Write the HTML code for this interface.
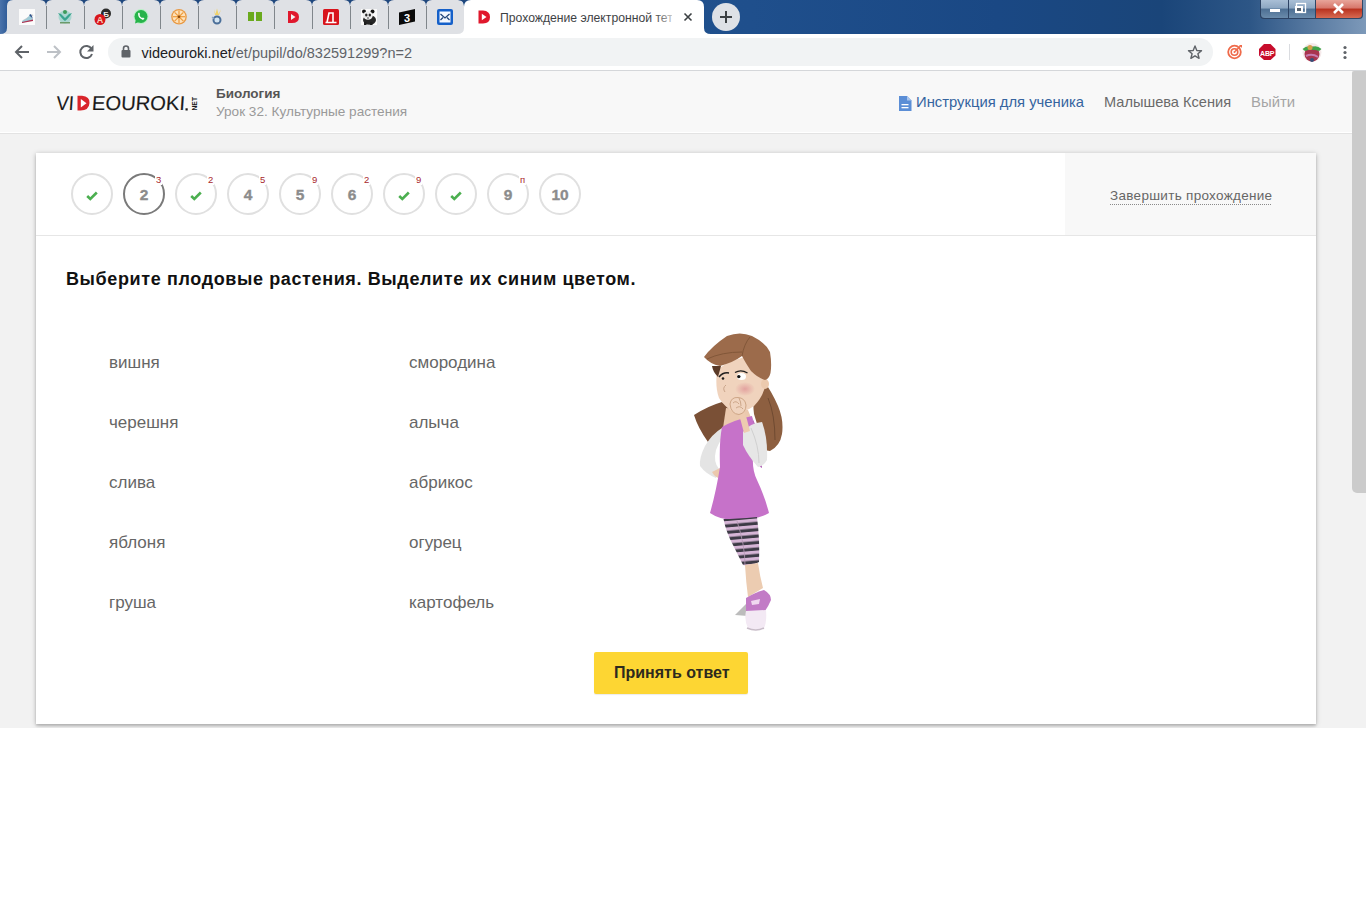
<!DOCTYPE html>
<html><head><meta charset="utf-8">
<style>
*{margin:0;padding:0;box-sizing:border-box}
html,body{width:1366px;height:900px;overflow:hidden;background:#fff;font-family:"Liberation Sans",sans-serif}
.abs{position:absolute}
.t{position:absolute;white-space:nowrap;line-height:1}
#page{position:absolute;left:0;top:71px;width:1366px;height:657px;background:#f2f2f2;overflow:hidden}
#hdr{position:absolute;left:0;top:0;width:1352px;height:63px;background:#f8f8f8;border-bottom:1px solid #e3e3e3;box-shadow:inset 0 -1px 0 #fff}
#thumb{position:absolute;left:1352px;top:0;width:24px;height:422px;background:#cbcbcb;border-radius:2px 2px 5px 5px}
#card{position:absolute;left:36px;top:82px;width:1280px;height:571px;background:#fff;box-shadow:0 1px 5px rgba(0,0,0,.26),0 2px 2px rgba(0,0,0,.12)}
#topbar{position:absolute;left:0;top:0;width:1280px;height:83px;border-bottom:1px solid #e6e6e6}
#rpanel{position:absolute;left:1029px;top:0;width:251px;height:82px;background:#f8f8f8}
.circ{position:absolute;top:20px;width:42px;height:42px;border-radius:50%;border:2px solid #e0e0e0;background:#fff}
.circ.act{border:2.5px solid #7a7a7a}
.num{position:absolute;left:0;top:0;width:100%;height:100%;text-align:center;line-height:40px;font-weight:bold;font-size:15.5px;color:#8c8c8c;-webkit-text-stroke:0.35px #8c8c8c}
.badge{position:absolute;font-size:9.5px;color:#a8282c;font-weight:normal;line-height:1;background:#fff;padding:0 1px}
.chk{position:absolute;left:15px;top:17px}
.word{position:absolute;font-size:17px;color:#666;line-height:1;white-space:nowrap}
</style></head><body>
<svg class="abs" style="left:0;top:0" width="1366" height="34" viewBox="0 0 1366 34">
<defs>
<linearGradient id="tg" x1="0" x2="1" y1="0" y2="0">
<stop offset="0" stop-color="#4a73ab"/><stop offset="0.006" stop-color="#2d5a96"/>
<stop offset="0.3" stop-color="#21548f"/><stop offset="0.55" stop-color="#1f4f8c"/>
<stop offset="0.73" stop-color="#1a4884"/><stop offset="0.85" stop-color="#1a4579"/>
<stop offset="0.915" stop-color="#2d5686"/><stop offset="1" stop-color="#7d99b9"/>
</linearGradient>
<radialGradient id="glow" cx="0.5" cy="0" r="0.5"><stop offset="0" stop-color="#c8d6e6" stop-opacity="0.55"/><stop offset="1" stop-color="#c8d6e6" stop-opacity="0"/></radialGradient>
</defs>
<rect width="1366" height="34" fill="url(#tg)"/>
<ellipse cx="1240" cy="0" rx="55" ry="30" fill="url(#glow)"/>
<!-- pinned tabs strip -->
<path d="M0,34 Q7,34 7,28 L7,6 Q7,0 13,0 L458,0 Q464,0 464,6 L464,34 Z" fill="#dfe1e5"/>
<g fill="#1f477d">
<path d="M40,0 Q46,0 46,6 Q46,0 52,0 Z"/><path d="M78,0 Q84,0 84,6 Q84,0 90,0 Z"/>
<path d="M116,0 Q122,0 122,6 Q122,0 128,0 Z"/><path d="M154,0 Q160,0 160,6 Q160,0 166,0 Z"/>
<path d="M192,0 Q198,0 198,6 Q198,0 204,0 Z"/><path d="M230,0 Q236,0 236,6 Q236,0 242,0 Z"/>
<path d="M268,0 Q274,0 274,6 Q274,0 280,0 Z"/><path d="M306,0 Q312,0 312,6 Q312,0 318,0 Z"/>
<path d="M344,0 Q350,0 350,6 Q350,0 356,0 Z"/><path d="M382,0 Q388,0 388,6 Q388,0 394,0 Z"/>
<path d="M420,0 Q426,0 426,6 Q426,0 432,0 Z"/><path d="M458,0 Q464,0 464,6 Q464,0 470,0 Z"/>
</g>
<g fill="#80868b">
<rect x="46" y="6" width="1" height="23"/><rect x="84" y="6" width="1" height="23"/>
<rect x="122" y="6" width="1" height="23"/><rect x="160" y="6" width="1" height="23"/>
<rect x="198" y="6" width="1" height="23"/><rect x="236" y="6" width="1" height="23"/>
<rect x="274" y="6" width="1" height="23"/><rect x="312" y="6" width="1" height="23"/>
<rect x="350" y="6" width="1" height="23"/><rect x="388" y="6" width="1" height="23"/>
<rect x="426" y="6" width="1" height="23"/>
</g>
<!-- active tab -->
<path d="M457,34 Q464,34 464,28 L464,7 Q464,0 471,0 L697,0 Q704,0 704,7 L704,28 Q704,34 711,34 Z" fill="#ffffff"/>
<!-- new tab button -->
<circle cx="726" cy="17" r="14" fill="#dee1e6"/>
<rect x="720" y="16" width="12" height="2" fill="#3c4043"/><rect x="725" y="11" width="2" height="12" fill="#3c4043"/>
<!-- favicons -->
<!-- 1 -->
<rect x="19" y="9" width="16" height="16" fill="#fbfbfb"/>
<path d="M23,21 L33,15" stroke="#cfcfcf" stroke-width="1.5"/>
<path d="M22,23 L33,20 L30,15 Q27,19 22,21 Z" fill="#9ecad6"/>
<path d="M22,23 L33,21 L33,19.5 L22,22 Z" fill="#b03050"/>
<path d="M29,15 L33,19 L31,14 Z" fill="#2a4f8a"/>
<!-- 2 -->
<circle cx="65" cy="17" r="6.5" fill="#a9d6d0"/>
<path d="M58,13 Q62,19 65,21 Q68,19 72,13 L69,14 L65,18 L61,14 Z" fill="#3aa58f"/>
<circle cx="65" cy="12" r="2" fill="#3f9a5a"/>
<rect x="60" y="22" width="10" height="1.5" fill="#6b9a6a"/>
<!-- 3 -->
<circle cx="106" cy="13.5" r="5" fill="#2b2b2b"/>
<text x="106" y="16.5" font-size="8" font-weight="bold" fill="#eee" text-anchor="middle" font-family="Liberation Sans">Б</text>
<circle cx="100" cy="19.5" r="5.5" fill="#d9161c"/>
<text x="100" y="23" font-size="9" font-weight="bold" fill="#f5d2c0" text-anchor="middle" font-family="Liberation Sans">A</text>
<!-- 4 whatsapp -->
<circle cx="141" cy="16.5" r="7.5" fill="#b4f2c2"/>
<circle cx="141" cy="16.5" r="6.5" fill="#27b34a"/>
<path d="M135,23.5 L136,19 L139,22 Z" fill="#27b34a"/>
<path d="M138,13.5 Q138,18 143,20 L144.5,18.5 L143,17.5 L142,18 Q140,17 139.5,15 L140,14 L139,12.5 Z" fill="#fff"/>
<!-- 5 orange wheel -->
<circle cx="179" cy="16.7" r="7.8" fill="#e89a45"/>
<circle cx="179" cy="16.7" r="6.5" fill="#fde2bd"/>
<g stroke="#ee9a3a" stroke-width="1.2">
<path d="M179,10.5 V23"/><path d="M172.8,16.7 H185.2"/><path d="M174.6,12.3 L183.4,21.1"/><path d="M183.4,12.3 L174.6,21.1"/>
</g>
<circle cx="179" cy="16.7" r="1.3" fill="#8a4a10"/>
<!-- 6 figure -->
<path d="M214,9 L215.5,14 L217,8.5 L218.5,14 L221,9.5 L219,15 L215,15 Z" fill="#f0d36a"/>
<circle cx="217" cy="20" r="3.5" fill="none" stroke="#4a6f9a" stroke-width="2"/>
<circle cx="217" cy="20" r="2" fill="#cfe6f7"/>
<path d="M212,17 L214.5,19" stroke="#8aa3bf" stroke-width="1.2"/>
<!-- 7 green squares -->
<rect x="248" y="12" width="6" height="9" fill="#6aaa1e"/><rect x="256" y="12" width="6" height="9" fill="#6aaa1e"/>
<!-- 8 red D -->
<path d="M288,11 L292,11 Q299,11.5 299,17 Q299,23 292,23 L288,23 Z" fill="#e0182d"/>
<path d="M291,14 L291,20 L295.5,17 Z" fill="#f2f2f2"/>
<!-- 9 red square Д -->
<rect x="323" y="9" width="16" height="16" rx="1.5" fill="#d8141c"/>
<path d="M325.5,22.5 H336.5 M327,22.5 L329,13 H333 V22.5" stroke="#fff" stroke-width="1.6" fill="none"/>
<!-- 10 panda -->
<rect x="361" y="9" width="16" height="16" fill="#fafafa"/>
<ellipse cx="369.5" cy="20" rx="6.5" ry="4.8" fill="#262626"/>
<circle cx="364" cy="11.5" r="2" fill="#161616"/><circle cx="372.5" cy="11.5" r="2" fill="#161616"/>
<ellipse cx="368" cy="15.5" rx="4.8" ry="4.2" fill="#ececec"/>
<ellipse cx="366.3" cy="15" rx="1.2" ry="1.5" fill="#2a2a2a"/><ellipse cx="369.8" cy="15" rx="1.2" ry="1.5" fill="#2a2a2a"/>
<circle cx="368" cy="18" r="0.8" fill="#333"/>
<rect x="364" y="22" width="2.5" height="3" fill="#1e1e1e"/><rect x="370" y="22" width="2.5" height="3" fill="#1e1e1e"/>
<!-- 11 black 3 -->
<path d="M399,12.5 L415,9 L415,21.5 L399,25 Z" fill="#0a0a0a"/>
<text x="407" y="21.5" font-size="11" font-weight="bold" fill="#fff" text-anchor="middle" font-family="Liberation Sans" style="-webkit-font-smoothing:antialiased">3</text>
<!-- 12 blue envelope -->
<rect x="437" y="9" width="16" height="16" rx="2" fill="#1560c9"/>
<rect x="439.5" y="11.5" width="11" height="11" fill="#f4f8ff"/>
<path d="M440.5,14 L445,18 L449.5,14 M440.5,20 L443,17.5 M449.5,20 L447,17.5" stroke="#22467a" stroke-width="1.3" fill="none"/>
<!-- active tab favicon -->
<path d="M478.5,10.5 L483,10.5 Q490,11 490,17 Q490,23.5 483,23.5 L478.5,23.5 Z" fill="#e0182d"/>
<path d="M481.8,13.8 L481.8,20.2 L486.5,17 Z" fill="#fff"/>
<defs><linearGradient id="fade" x1="0" x2="1"><stop offset="0.86" stop-color="#3c4043"/><stop offset="1" stop-color="#3c4043" stop-opacity="0"/></linearGradient></defs>
<text x="500" y="21.5" font-family="Liberation Sans" font-size="12.2px" fill="url(#fade)">Прохождение электронной тетр</text>
<rect x="672" y="8" width="8" height="18" fill="#fff"/>
<!-- close x -->
<path d="M684.5,13.5 L691.5,20.5 M691.5,13.5 L684.5,20.5" stroke="#3c4043" stroke-width="1.6"/>
<!-- window buttons -->
<g>
<path d="M1260,0 L1260,15 Q1260,19 1264,19 L1359,19 Q1363,19 1363,15 L1363,0 Z" fill="#2a3f5e" opacity="0.9"/>
<path d="M1261,0 L1261,14.5 Q1261,18 1265,18 L1288,18 L1288,0 Z" fill="url(#bmin)"/>
<path d="M1289,0 L1289,18 L1315,18 L1315,0 Z" fill="url(#bmin)"/>
<path d="M1316,0 L1316,18 L1358,18 Q1362,18 1362,14.5 L1362,0 Z" fill="url(#bclose)"/>
<linearGradient id="bmin" x1="0" x2="0" y1="0" y2="1"><stop offset="0" stop-color="#a9bfd6"/><stop offset="0.45" stop-color="#8da7c2"/><stop offset="0.5" stop-color="#4d6f93"/><stop offset="1" stop-color="#6a8bab"/></linearGradient>
<linearGradient id="bclose" x1="0" x2="0" y1="0" y2="1"><stop offset="0" stop-color="#e8a59a"/><stop offset="0.45" stop-color="#d7766a"/><stop offset="0.5" stop-color="#b8321f"/><stop offset="1" stop-color="#d86a52"/></linearGradient>
<rect x="1270" y="9" width="10" height="3" fill="#fff"/>
<rect x="1296.5" y="3.5" width="9" height="9" fill="none" stroke="#fff" stroke-width="1.3"/>
<rect x="1295" y="6" width="8" height="7" fill="#fff"/><rect x="1297" y="8" width="4" height="3" fill="#55616e"/>
<path d="M1334,4 L1343,13 M1343,4 L1334,13" stroke="#fff" stroke-width="2.6"/>
</g>
</svg>

<svg class="abs" style="left:0;top:34px" width="1366" height="37" viewBox="0 34 1366 37">
<rect x="0" y="34" width="1366" height="36" fill="#ffffff"/>
<rect x="0" y="70" width="1366" height="1" fill="#d5d7da"/>
<!-- back -->
<path d="M29,52 H16 M22,46 L16,52 L22,58" stroke="#5f6368" stroke-width="2" fill="none"/>
<!-- forward -->
<path d="M47,52 H60 M54,46 L60,52 L54,58" stroke="#bdc1c6" stroke-width="2" fill="none"/>
<!-- reload -->
<path d="M91.5,49 A6,6 0 1 0 92,54" stroke="#5f6368" stroke-width="2" fill="none"/>
<path d="M93.5,45 L93.5,51.5 L87,51.5 Z" fill="#5f6368"/>
<!-- omnibox -->
<rect x="108" y="38" width="1105" height="28" rx="14" fill="#f1f3f4"/>
<!-- lock -->
<rect x="121.5" y="50" width="9" height="7.5" rx="1" fill="#5f6368"/>
<path d="M123.5,50.5 V48.5 A2.5,2.5 0 0 1 128.5,48.5 V50.5" stroke="#5f6368" stroke-width="1.6" fill="none"/>
<text x="141.5" y="57.5" font-family="Liberation Sans" font-size="14.5px" fill="#202124">videouroki.net<tspan fill="#5f6368">/et/pupil/do/832591299?n=2</tspan></text>
<!-- star -->
<path d="M1195,46 L1196.8,50.5 L1201.5,50.8 L1197.9,53.8 L1199.1,58.3 L1195,55.8 L1190.9,58.3 L1192.1,53.8 L1188.5,50.8 L1193.2,50.5 Z" stroke="#5f6368" stroke-width="1.4" fill="none" stroke-linejoin="round"/>
<!-- target icon -->
<circle cx="1234.5" cy="52" r="6.3" fill="none" stroke="#ef6a4a" stroke-width="1.8"/>
<circle cx="1234.5" cy="52" r="3.3" fill="none" stroke="#ef6a4a" stroke-width="1.6"/>
<circle cx="1234.5" cy="52" r="1" fill="#ef6a4a"/>
<path d="M1235,51.5 L1240.5,46" stroke="#ef6a4a" stroke-width="1.5"/>
<path d="M1239,45 L1242,45 L1242,48 Z" fill="#ef6a4a"/>
<!-- ABP -->
<path d="M1264,44 L1270.5,44 L1275.5,49 L1275.5,55.5 L1270.5,60 L1264,60 L1259,55.5 L1259,49 Z" fill="#c70d2c"/>
<text x="1267.2" y="55.8" font-family="Liberation Sans" font-size="7px" font-weight="bold" fill="#fff" text-anchor="middle" letter-spacing="-0.2">ABP</text>
<!-- separator -->
<rect x="1289" y="44" width="1" height="16" fill="#dadce0"/>
<!-- avatar -->
<circle cx="1312" cy="52.5" r="9.5" fill="#f5e9ea"/>
<circle cx="1312" cy="54" r="7.5" fill="#a8344e"/>
<path d="M1302.5,49 Q1307,45 1312,47 Q1317,45 1321.5,49 L1319,51 Q1312,48.5 1305,51 Z" fill="#3fa54a"/>
<circle cx="1310" cy="47.5" r="2.5" fill="#d4a14a"/>
<path d="M1306,56 Q1312,53 1318,57" stroke="#c77ab0" stroke-width="2" fill="none"/>
<circle cx="1312" cy="60" r="2" fill="#37507a"/>
<!-- menu dots -->
<circle cx="1345" cy="47.5" r="1.6" fill="#5f6368"/><circle cx="1345" cy="52.5" r="1.6" fill="#5f6368"/><circle cx="1345" cy="57.5" r="1.6" fill="#5f6368"/>
</svg>

<div id="page">
 <div id="hdr">
  <svg class="abs" style="left:50px;top:20px" width="155" height="28" viewBox="50 91 155 28">
<g transform="translate(0,110.5) skewX(-4) translate(0,-110.5)" font-family="Liberation Sans" font-size="20px" fill="#1a1a1a" stroke="#1a1a1a" stroke-width="0.15">
<text x="56" y="110.5" textLength="17.5" lengthAdjust="spacingAndGlyphs">VI</text>
<text x="91.5" y="110.5" textLength="93" lengthAdjust="spacingAndGlyphs">EOUROKI</text>
</g>
<path d="M77.5,95.8 L82,95.8 Q90,96.5 89.5,103 Q89,110.5 80.5,110.5 L77.5,110.5 Z" fill="#d9252b"/>
<path d="M80.8,99 L80.8,107.5 L86.5,103.2 Z" fill="#fff"/>
<rect x="185.5" y="108.3" width="2.2" height="2.2" fill="#1a1a1a"/>
<text transform="translate(196.8,110.5) rotate(-90)" font-family="Liberation Sans" font-size="7.5px" font-weight="bold" fill="#1a1a1a" textLength="13.5" lengthAdjust="spacingAndGlyphs">NET</text>
</svg>
  <div class="t" style="left:216px;top:16px;font-size:13.5px;font-weight:bold;color:#555">Биология</div>
  <div class="t" style="left:216px;top:33.5px;font-size:13.6px;color:#9a9a9a">Урок 32. Культурные растения</div>
  <svg class="abs" style="left:899px;top:25px" width="13" height="15" viewBox="0 0 13 15"><path d="M0,0 H8 L12.5,4.5 V15 H0 Z" fill="#5b8ed6"/><path d="M8,0 V4.5 H12.5 Z" fill="#a9c6ee"/><rect x="2.5" y="8" width="7" height="1.3" fill="#fff"/><rect x="2.5" y="11" width="7" height="1.3" fill="#fff"/></svg>
  <div class="t" style="left:916px;top:24px;font-size:14.8px;color:#35649f">Инструкция для ученика</div>
  <div class="t" style="left:1104px;top:24px;font-size:14.6px;color:#6a6a6a">Малышева Ксения</div>
  <div class="t" style="left:1251px;top:24px;font-size:14.9px;color:#a5a5a5">Выйти</div>
 </div>
 <div id="thumb"></div>
 <div id="card">
  <div id="topbar"></div>
  <div id="rpanel">
   <div class="t" style="left:45px;top:36px;font-size:13.5px;letter-spacing:0.3px;color:#666">Завершить прохождение</div>
   <div class="abs" style="left:45px;top:51px;width:161px;height:1px;background:repeating-linear-gradient(90deg,#8a8a8a 0 1px,transparent 1px 2px)"></div>
  </div>
  <div class="circ" style="left:35px"><svg class="chk" width="12" height="10" viewBox="0 0 12 10" style="left:13px;top:16px"><path d="M1.2,5 L4.3,8 L10.8,1.5" stroke="#4caf50" stroke-width="2.6" fill="none"/></svg></div>
<div class="circ act" style="left:87px"><div class="num">2</div></div>
<div class="badge" style="left:119px;top:22px">3</div>
<div class="circ" style="left:139px"><svg class="chk" width="12" height="10" viewBox="0 0 12 10" style="left:13px;top:16px"><path d="M1.2,5 L4.3,8 L10.8,1.5" stroke="#4caf50" stroke-width="2.6" fill="none"/></svg></div>
<div class="badge" style="left:171px;top:22px">2</div>
<div class="circ" style="left:191px"><div class="num">4</div></div>
<div class="badge" style="left:223px;top:22px">5</div>
<div class="circ" style="left:243px"><div class="num">5</div></div>
<div class="badge" style="left:275px;top:22px">9</div>
<div class="circ" style="left:295px"><div class="num">6</div></div>
<div class="badge" style="left:327px;top:22px">2</div>
<div class="circ" style="left:347px"><svg class="chk" width="12" height="10" viewBox="0 0 12 10" style="left:13px;top:16px"><path d="M1.2,5 L4.3,8 L10.8,1.5" stroke="#4caf50" stroke-width="2.6" fill="none"/></svg></div>
<div class="badge" style="left:379px;top:22px">9</div>
<div class="circ" style="left:399px"><svg class="chk" width="12" height="10" viewBox="0 0 12 10" style="left:13px;top:16px"><path d="M1.2,5 L4.3,8 L10.8,1.5" stroke="#4caf50" stroke-width="2.6" fill="none"/></svg></div>
<div class="circ" style="left:451px"><div class="num">9</div></div>
<div class="badge" style="left:483px;top:22px">п</div>
<div class="circ" style="left:503px"><div class="num">10</div></div>
  <div class="t" style="left:30px;top:117px;font-size:18px;font-weight:bold;letter-spacing:0.62px;color:#111">Выберите плодовые растения. Выделите их синим цветом.</div>
  <div class="word" style="left:73px;top:200.5px">вишня</div>
<div class="word" style="left:373px;top:200.5px">смородина</div>
<div class="word" style="left:73px;top:260.5px">черешня</div>
<div class="word" style="left:373px;top:260.5px">алыча</div>
<div class="word" style="left:73px;top:320.5px">слива</div>
<div class="word" style="left:373px;top:320.5px">абрикос</div>
<div class="word" style="left:73px;top:380.5px">яблоня</div>
<div class="word" style="left:373px;top:380.5px">огурец</div>
<div class="word" style="left:73px;top:440.5px">груша</div>
<div class="word" style="left:373px;top:440.5px">картофель</div>
  <div class="abs" style="left:558px;top:499px;width:154px;height:42px;background:#fdd633;border-radius:2px;box-shadow:0 1px 1px rgba(0,0,0,.08)"></div>
  <div class="t" style="left:578px;top:512px;font-size:16px;font-weight:bold;color:#2d2a1e">Принять ответ</div>
 </div>
</div>
<svg class="abs" style="left:680px;top:325px" width="120" height="312" viewBox="680 325 120 312">
<defs>
<pattern id="stripes" width="10" height="6.4" patternUnits="userSpaceOnUse" patternTransform="rotate(-5)">
<rect width="10" height="6.4" fill="#d6b5d6"/><rect y="3.3" width="10" height="3.1" fill="#3d3b46"/>
</pattern>
</defs>
<!-- back hair right strand -->
<path d="M762,378 Q772,392 778,406 Q784,420 782,434 Q780,446 770,451 L764,450 Q760,432 754,414 Q752,398 756,386 Z" fill="#8d5f40"/>
<path d="M768,398 Q775,415 775,440" stroke="#6f4a31" stroke-width="1" fill="none"/>
<!-- back hair left strand -->
<path d="M722,402 Q708,406 694,415 Q698,428 708,442 Q716,437 723,429 Q731,421 736,414 Z" fill="#7a5036"/>
<path d="M726,408 L748,410 L752,420 L723,428 Z" fill="#ebc9ae"/>
<!-- left sleeve -->
<path d="M722,428 Q712,434 705,446 Q699,458 700,466 Q706,474 716,478 L719,469 Q713,462 716,450 Q720,440 725,434 Z" fill="#e4e4e4"/>
<!-- left hand at hip -->
<path d="M712,472 Q716,479 721,478 L720,468 Z" fill="#ecc8ad"/>
<!-- dress -->
<path d="M722,427 Q734,420 752,416 Q757,436 753,456 Q752,470 757,480 Q765,497 769,513 Q757,520 735,520 Q720,520 710,513 Q716,492 720,467 Q719,442 722,427 Z" fill="#c672c9"/>
<path d="M752,417 Q757,436 753,456 Q758,466 762,468 L760,436 Z" fill="#b160b5"/>
<!-- right sleeve -->
<path d="M743,432 Q750,423 762,422 Q768,438 767,460 Q763,467 758,467 Q748,456 743,445 Z" fill="#e6e6e6"/>
<path d="M751,428 Q759,446 759,463" stroke="#d0d0d0" stroke-width="1" fill="none"/>
<!-- forearm -->
<path d="M737,410 Q741,420 744,433 L750,431 Q747,418 743,408 Z" fill="#eecbb0"/>
<!-- face -->
<path d="M717,370 Q732,358 752,356 Q764,366 766,382 Q764,396 754,406 Q744,413 734,413 Q724,406 719,398 Q715,388 717,370 Z" fill="#f0d3bd"/>
<!-- ear -->
<ellipse cx="765" cy="384" rx="4" ry="5" fill="#eccaae"/>
<!-- blush -->
<radialGradient id="blush"><stop offset="0" stop-color="#e09a9a" stop-opacity="0.85"/><stop offset="1" stop-color="#e09a9a" stop-opacity="0"/></radialGradient>
<ellipse cx="745" cy="389" rx="10" ry="7" fill="url(#blush)"/>
<!-- nose -->
<path d="M726,385 Q722,388 725,392" stroke="#c9a48a" stroke-width="1" fill="none"/>
<!-- fist -->
<path d="M730,404 Q731,397 738,397.5 Q745,398 746,405 Q746,413 739,414.5 Q731,414 730,404 Z" fill="#f0d4bf" stroke="#c9a080" stroke-width="0.9"/>
<path d="M733,403 Q736,400 739,404 M736,408 Q740,405 743,409 M739,398 Q741,402 741,406" stroke="#c39a7b" stroke-width="0.8" fill="none"/>
<!-- eyes -->
<path d="M719,377 Q723,372 729,373" stroke="#1e1e1e" stroke-width="1.5" fill="none"/>
<circle cx="723" cy="378.5" r="1.3" fill="#1e1e1e"/>
<ellipse cx="741.5" cy="376.5" rx="4.5" ry="3.6" fill="#fff"/>
<circle cx="738.8" cy="376.6" r="1.7" fill="#111"/>
<path d="M735,372.5 Q741,369 747.5,373" stroke="#1e1e1e" stroke-width="1.4" fill="none"/>
<!-- hair top -->
<path d="M704,357 Q712,346 727,336 Q740,331 752,336 Q766,343 770,352 Q772,364 770.5,373 Q769,379 765,380 Q758,378 751,371 Q745,362 742,356 Q734,362 720,366 Q710,364 704,357 Z" fill="#9c6b4b"/>
<path d="M707,359 Q722,352 742,352 M742,356 Q744,344 750,337" stroke="#825739" stroke-width="1" fill="none"/>
<path d="M712,366 Q713,372 718,377 L721,366 Z" fill="#5a3a27"/>
<!-- leggings -->
<path d="M723.5,519 Q735,519 757,517 Q760,540 759,562 Q751,567 743,565 Q738,555 733,545 Q726,532 723.5,519 Z" fill="url(#stripes)"/>
<path d="M737,521 Q745,545 745,565" stroke="#b699b6" stroke-width="0.8" fill="none"/>
<!-- leg -->
<path d="M745,565 L758,563 Q760,577 763,588 L748,597 Q746,582 745,565 Z" fill="#ecccb1"/>
<!-- back shoe shadow -->
<path d="M735,615 L747,603 L748,616 Z" fill="#bcbcbc"/>
<!-- shoe -->
<path d="M746,598 Q756,592 764,590 Q771,594 771,600 Q768,607 765,611 L746,611 Z" fill="#c27bc6"/>
<path d="M751,601 L760,599 L759,604 L752,605 Z" fill="#f0d8f0"/>
<path d="M746,611 L766,610 Q767,622 764,628 Q756,631 748,628 Q744,620 746,611 Z" fill="#f3e9f4"/>
<path d="M747,628 Q756,632 764,628" stroke="#c8bcc8" stroke-width="1.5" fill="none"/>
</svg>

</body></html>
